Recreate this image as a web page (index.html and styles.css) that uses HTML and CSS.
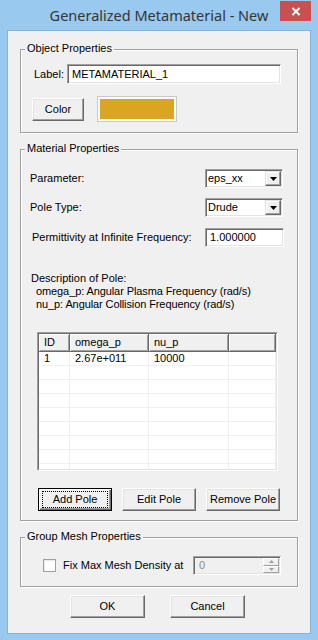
FILE: index.html
```html
<!DOCTYPE html>
<html>
<head>
<meta charset="utf-8">
<title>Generalized Metamaterial - New</title>
<link rel="stylesheet" href="styles.css">
</head>
<body>
<div class="window">
  <div class="titlebar">
    <span class="title">Generalized Metamaterial - New</span>
    <div class="close">
      <svg width="10" height="9" viewBox="0 0 10 9"><path d="M1.5 1 L8.5 8 M8.5 1 L1.5 8" stroke="#fff" stroke-width="2" fill="none"/></svg>
    </div>
  </div>
  <div class="client">
    <div class="group g1">
      <span class="legend">Object Properties</span>
      <div class="row label-row">
        <span>Label:</span>
        <div class="edit label-edit">METAMATERIAL_1</div>
      </div>
      <div class="row color-row">
        <div class="btn color-btn">Color</div>
        <div class="swatch"><div class="swatch-fill"></div></div>
      </div>
    </div>

    <div class="group g2">
      <span class="legend">Material Properties</span>
      <div class="row param-row">
        <span>Parameter:</span>
        <div class="combo"><span class="combo-text">eps_xx</span><span class="combo-btn"><svg width="7" height="4" viewBox="0 0 7 4"><polygon points="0,0 7,0 3.5,4" fill="#000"/></svg></span></div>
      </div>
      <div class="row param-row pole-row">
        <span>Pole Type:</span>
        <div class="combo"><span class="combo-text">Drude</span><span class="combo-btn"><svg width="7" height="4" viewBox="0 0 7 4"><polygon points="0,0 7,0 3.5,4" fill="#000"/></svg></span></div>
      </div>
      <div class="row perm-row">
        <span>Permittivity at Infinite Frequency:</span>
        <div class="edit perm-edit">1.000000</div>
      </div>
      <div class="desc">
        <div>Description of Pole:</div>
        <div class="sub">omega_p: Angular Plasma Frequency (rad/s)</div>
        <div class="sub">nu_p: Angular Collision Frequency (rad/s)</div>
      </div>
      <div class="lv">
        <div class="lv-inner">
          <div class="lv-head">
            <div class="hcell">ID</div>
            <div class="hcell">omega_p</div>
            <div class="hcell">nu_p</div>
            <div class="hcell"></div>
          </div>
          <div class="lv-row"><div class="cell">1</div><div class="cell">2.67e+011</div><div class="cell">10000</div><div class="cell"></div></div>
          <div class="lv-row"><div class="cell"></div><div class="cell"></div><div class="cell"></div><div class="cell"></div></div>
          <div class="lv-row"><div class="cell"></div><div class="cell"></div><div class="cell"></div><div class="cell"></div></div>
          <div class="lv-row"><div class="cell"></div><div class="cell"></div><div class="cell"></div><div class="cell"></div></div>
          <div class="lv-row"><div class="cell"></div><div class="cell"></div><div class="cell"></div><div class="cell"></div></div>
          <div class="lv-row"><div class="cell"></div><div class="cell"></div><div class="cell"></div><div class="cell"></div></div>
          <div class="lv-row"><div class="cell"></div><div class="cell"></div><div class="cell"></div><div class="cell"></div></div>
          <div class="lv-row"><div class="cell"></div><div class="cell"></div><div class="cell"></div><div class="cell"></div></div>
          <div class="lv-row"><div class="cell"></div><div class="cell"></div><div class="cell"></div><div class="cell"></div></div>
        </div>
      </div>
      <div class="row pole-btns">
        <div class="btn pole-btn default"><span class="focus">Add Pole</span></div>
        <div class="btn pole-btn">Edit Pole</div>
        <div class="btn pole-btn">Remove Pole</div>
      </div>
    </div>

    <div class="group g3">
      <span class="legend">Group Mesh Properties</span>
      <div class="row mesh-row">
        <span class="check"></span>
        <span class="check-label">Fix Max Mesh Density at</span>
        <div class="spin">
          <span class="spin-text">0</span>
          <span class="spin-btns">
            <span class="spin-b"><svg width="5" height="3" viewBox="0 0 5 3"><polygon points="2.5,0 5,3 0,3" fill="#a0a0a0"/></svg></span>
            <span class="spin-b"><svg width="5" height="3" viewBox="0 0 5 3"><polygon points="0,0 5,0 2.5,3" fill="#a0a0a0"/></svg></span>
          </span>
        </div>
      </div>
    </div>

    <div class="row dlg-btns">
      <div class="btn dlg-btn">OK</div>
      <div class="btn dlg-btn">Cancel</div>
    </div>
  </div>
</div>
</body>
</html>
```

FILE: styles.css
```css
* { box-sizing: border-box; }
html, body { margin: 0; padding: 0; }
body {
  width: 318px;
  height: 640px;
  overflow: hidden;
  background: #99c9ef;
  font-family: "Liberation Sans", Arial, sans-serif;
  font-size: 11px;
  line-height: 13px;
  color: #000;
}
.window { width: 318px; height: 640px; background: #99c9ef; }

.titlebar {
  height: 30px;
  display: grid;
  grid-template-columns: 1fr auto 1fr;
  align-items: start;
}
.title {
  grid-column: 2;
  font-family: "Noto Sans", "Open Sans", sans-serif;
  font-size: 14.5px;
  line-height: 30px;
  color: #353535;
  white-space: nowrap;
}
.close {
  grid-column: 3;
  justify-self: end;
  width: 31px;
  height: 20px;
  margin-top: 1px;
  margin-right: 7px;
  background: #c75050;
  display: flex;
  align-items: center;
  justify-content: center;
}

.client {
  margin: 0 7px;
  border: 1px solid #86b3da;
  background: #f0f0f0;
  padding: 0 0 15px 0;
}

.group {
  position: relative;
  width: 278px;
  margin-left: 12px;
  border: 1px solid #a0a0a0;
  box-shadow: 1px 1px 0 #fff, inset 1px 1px 0 #fff;
}
.legend {
  position: absolute;
  top: -8px;
  left: 4px;
  padding: 0 2px;
  background: #f0f0f0;
  line-height: 13px;
  white-space: nowrap;
}
.row { display: flex; align-items: center; }

/* sunken edit */
.edit, .combo, .spin {
  background: #fff;
  border-style: solid;
  border-width: 1px;
  border-color: #a0a0a0 #fff #fff #a0a0a0;
  box-shadow: inset 1px 1px 0 #696969, inset -1px -1px 0 #e3e3e3;
  white-space: nowrap;
}
.edit { display: flex; align-items: center; padding-left: 4px; }

/* raised button */
.btn {
  background: #f0f0f0;
  border-style: solid;
  border-width: 1px;
  border-color: #fff #696969 #696969 #fff;
  box-shadow: inset -1px -1px 0 #a0a0a0, inset 1px 1px 0 #e3e3e3;
  display: flex;
  align-items: center;
  justify-content: center;
  white-space: nowrap;
}

/* group 1 */
.g1 { margin-top: 18px; padding: 14px 0 10px 0; }
.label-row { height: 20px; padding: 0 16px 0 13px; }
.label-edit { margin-left: auto; width: 214px; height: 20px; }
.color-row { margin-top: 12px; height: 26px; padding-left: 11px; gap: 13px; }
.color-btn { width: 52px; height: 23px; }
.swatch {
  width: 80px;
  height: 26px;
  border: 1px solid #c9c9c9;
  background: #fbfbfb;
  padding: 2px;
}
.swatch-fill { width: 100%; height: 100%; background: #daa520; }

/* group 2 */
.g2 { margin-top: 16px; padding: 19px 0 9px 0; }
.param-row { height: 19px; padding: 0 14px 0 9px; }
.pole-row { margin-top: 10px; }
.combo {
  margin-left: auto;
  width: 78px;
  height: 19px;
  display: flex;
  align-items: stretch;
  padding: 1px;
}
.combo-text { flex: 1; padding-left: 1px; display: flex; align-items: center; }
.combo-btn {
  width: 16px;
  background: #f0f0f0;
  border-style: solid;
  border-width: 1px;
  border-color: #e3e3e3 #696969 #696969 #e3e3e3;
  box-shadow: inset -1px -1px 0 #a0a0a0, inset 1px 1px 0 #fff;
  display: flex;
  align-items: center;
  justify-content: center;
}
.perm-row { margin-top: 11px; height: 19px; padding: 0 13px 0 11px; }
.perm-edit { margin-left: auto; width: 79px; height: 19px; }
.desc { margin-top: 25px; padding-left: 10px; line-height: 13px; }
.desc .sub { padding-left: 5px; letter-spacing: -0.1px; }

.lv {
  margin: 21px 0 0 16px;
  width: 241px;
  height: 139px;
  border-style: solid;
  border-width: 1px;
  border-color: #a0a0a0 #fff #fff #a0a0a0;
}
.lv-inner {
  width: 100%;
  height: 100%;
  overflow: hidden;
  background: #fff;
  border-style: solid;
  border-width: 1px;
  border-color: #696969 #e3e3e3 #e3e3e3 #696969;
}
.lv-head, .lv-row {
  display: grid;
  grid-template-columns: 31px 79px 80px 1fr;
}
.lv-head { height: 18px; }
.hcell {
  background: #f0f0f0;
  border-right: 1px solid #696969;
  border-bottom: 1px solid #696969;
  box-shadow: inset 1px 1px 0 #fff, inset -1px -1px 0 #a0a0a0;
  padding-left: 5px;
  display: flex;
  align-items: center;
}
.lv-row { height: 14px; }
.cell {
  border-right: 1px solid #f0f0f0;
  border-bottom: 1px solid #f0f0f0;
  padding-left: 5px;
  display: flex;
  align-items: center;
}

.pole-btns { margin-top: 17px; padding-left: 17px; gap: 10px; }
.pole-btn { width: 74px; height: 23px; }
.pole-btn.default {
  border: 1px solid #000;
  box-shadow: inset 1px 1px 0 #fff, inset -1px -1px 0 #696969, inset -2px -2px 0 #a0a0a0;
}
.focus {
  width: 64px;
  height: 15px;
  outline: 1px dotted #000;
  display: flex;
  align-items: center;
  justify-content: center;
}

/* group 3 */
.g3 { margin-top: 16px; padding: 18px 0 11px 0; }
.mesh-row { height: 19px; padding: 0 16px 0 22px; }
.check {
  width: 13px;
  height: 13px;
  background: #fff;
  border: 1px solid #a0a0a0;
  box-shadow: inset 1px 1px 0 #e8e8e8;
}
.check-label { margin-left: 7px; }
.spin {
  margin-left: auto;
  width: 88px;
  height: 19px;
  background: #f0f0f0;
  display: flex;
  align-items: stretch;
  padding: 1px;
}
.spin-text { flex: 1; padding-left: 4px; color: #8d8d8d; display: flex; align-items: center; }
.spin-btns { width: 16px; display: flex; flex-direction: column; }
.spin-b {
  flex: 1;
  background: #f0f0f0;
  border-style: solid;
  border-width: 1px;
  border-color: #fff #a0a0a0 #a0a0a0 #fff;
  display: flex;
  align-items: center;
  justify-content: center;
}

.dlg-btns { margin-top: 8px; padding-left: 62px; gap: 25px; }
.dlg-btn { width: 75px; height: 23px; }
```
